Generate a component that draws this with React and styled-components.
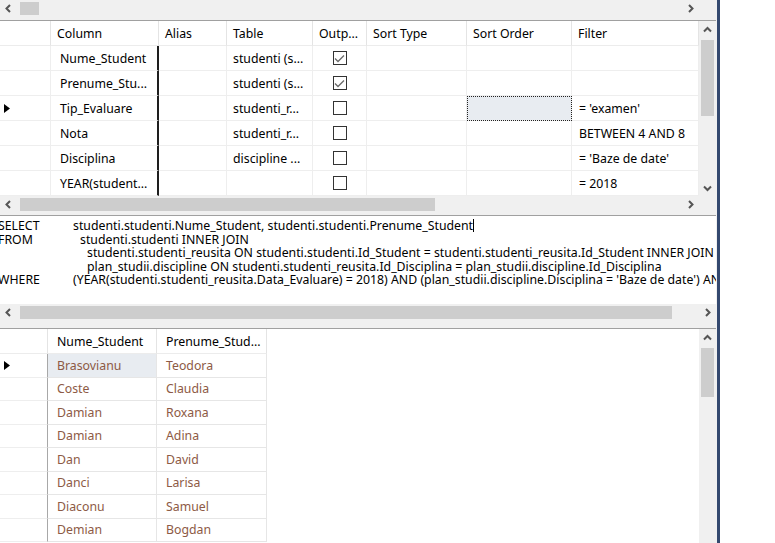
import React from "react";
import styled, { createGlobalStyle } from "styled-components";

const GlobalStyle = createGlobalStyle`
  html, body {
    margin: 0;
    padding: 0;
    background: #fff;
  }
  body {
    font-family: "Noto Sans", "Open Sans", sans-serif;
    font-size: 12.3px;
    color: #000;
  }
`;

const Screen = styled.div`
  display: flex;
  width: 775px;
  height: 543px;
  overflow: hidden;
  background: #fff;
`;

const Designer = styled.div`
  width: 716px;
  display: flex;
  flex-direction: column;
  background: #f0f0f0;
  border-right: 1px solid #f0f0f0;
  box-shadow: 3px 0 0 #34496f;
  margin-right: 3px;
`;

/* scrollbars */

const HScroll = styled.div`
  height: 17px;
  flex: none;
  display: flex;
  align-items: center;
  background: #f0f0f0;
  padding-right: ${(p) => (p.$corner ? "17px" : "0")};
`;

const ArrowBtn = styled.div`
  width: 17px;
  height: 17px;
  flex: none;
  display: flex;
  align-items: center;
  justify-content: center;
`;

const HTrack = styled.div`
  flex: 1;
  height: 100%;
  display: flex;
  align-items: center;
  padding-left: 3px;
`;

const HThumb = styled.div`
  width: ${(p) => p.$size}px;
  height: 13px;
  background: #cdcdcd;
`;

const VScroll = styled.div`
  width: 17px;
  flex: none;
  display: flex;
  flex-direction: column;
  background: #f0f0f0;
`;

const VTrack = styled.div`
  flex: 1;
  display: flex;
  flex-direction: column;
  align-items: center;
  padding-top: 2px;
`;

const VThumb = styled.div`
  width: 13px;
  height: ${(p) => p.$size}px;
  background: #cdcdcd;
`;

const Chevron = ({ dir }) => {
  const pts = {
    left: "5,1 1.5,4.5 5,8",
    right: "2,1 5.5,4.5 2,8",
    up: "1,5.5 4.5,2 8,5.5",
    down: "1,2.5 4.5,6 8,2.5",
  }[dir];
  const horiz = dir === "left" || dir === "right";
  return (
    <svg width={horiz ? 7 : 9} height={horiz ? 9 : 8} viewBox={horiz ? "0 0 7 9" : "0 0 9 8"}>
      <polyline points={pts} fill="none" stroke="#555" strokeWidth="2" />
    </svg>
  );
};

const HScrollBar = ({ thumb, corner }) => (
  <HScroll $corner={corner}>
    <ArrowBtn>
      <Chevron dir="left" />
    </ArrowBtn>
    <HTrack>
      <HThumb $size={thumb} />
    </HTrack>
    <ArrowBtn>
      <Chevron dir="right" />
    </ArrowBtn>
  </HScroll>
);

const VScrollBar = ({ thumb, down }) => (
  <VScroll>
    <ArrowBtn>
      <Chevron dir="up" />
    </ArrowBtn>
    <VTrack>
      <VThumb $size={thumb} />
    </VTrack>
    {down && (
      <ArrowBtn>
        <Chevron dir="down" />
      </ArrowBtn>
    )}
  </VScroll>
);

const Splitter = styled.div`
  height: ${(p) => p.$h}px;
  flex: none;
  background: #f0f0f0;
  border-bottom: 1px solid #a0a0a0;
  box-sizing: border-box;
`;

/* criteria grid */

const CriteriaPane = styled.div`
  height: 175px;
  flex: none;
  display: flex;
`;

const CritGrid = styled.div`
  flex: 1;
  display: grid;
  grid-template-columns: 51px 108px 68px 86px 54px 100px 105px 127px;
  grid-auto-rows: 25px;
  background: #fff;
  overflow: hidden;
`;

const HeadCell = styled.div`
  display: flex;
  align-items: center;
  padding-left: 6px;
  border-right: 1px solid #e4e4e4;
  border-bottom: 1px solid #ececec;
  white-space: nowrap;
  overflow: hidden;
`;

const Cell = styled.div`
  display: flex;
  align-items: center;
  justify-content: ${(p) => (p.$center ? "center" : "flex-start")};
  padding-left: ${(p) => (p.$center ? 0 : p.$pad ?? 6)}px;
  border-right: ${(p) => (p.$dark ? "2px solid #1e1e1e" : "1px solid #eeeeee")};
  border-bottom: 1px solid #eeeeee;
  background: ${(p) => (p.$focus ? "#e8ecf1" : "transparent")};
  outline: ${(p) => (p.$focus && !p.$noRing ? "1px dotted #222" : "none")};
  outline-offset: -1px;
  white-space: nowrap;
  overflow: hidden;
`;

const RowHead = styled.div`
  display: flex;
  align-items: center;
  padding-left: 4px;
  border-right: 1px solid ${(p) => p.$line};
  border-bottom: 1px solid #eeeeee;
`;

const Pointer = () => (
  <svg width="6" height="9" viewBox="0 0 6 9">
    <polygon points="0,0 6,4.5 0,9" fill="#000" />
  </svg>
);

const Box = styled.div`
  width: 12px;
  height: 12px;
  border: 1px solid #333;
  background: #fff;
  display: flex;
  align-items: center;
  justify-content: center;
`;

const CheckBox = ({ checked }) => (
  <Box>
    {checked && (
      <svg width="11" height="9" viewBox="0 0 11 9">
        <polyline points="1,4.5 4,7.5 10,1.5" fill="none" stroke="#6a6a6a" strokeWidth="1.3" />
      </svg>
    )}
  </Box>
);

const criteria = [
  { col: "Nume_Student", table: "studenti (s...", out: true },
  { col: "Prenume_Stu...", table: "studenti (s...", out: true },
  { col: "Tip_Evaluare", table: "studenti_r...", filter: "= 'examen'", current: true },
  { col: "Nota", table: "studenti_r...", filter: "BETWEEN 4 AND 8" },
  { col: "Disciplina", table: "discipline ...", filter: "= 'Baze de date'" },
  { col: "YEAR(student...", table: "", filter: "= 2018" },
];

const headers = ["", "Column", "Alias", "Table", "Outp...", "Sort Type", "Sort Order", "Filter"];

/* sql pane */

const SqlPane = styled.div`
  height: 88px;
  flex: none;
  background: #fff;
  padding-top: 3px;
  box-sizing: border-box;
  overflow: hidden;
  line-height: 13.6px;
`;

const SqlLine = styled.div`
  display: flex;
  white-space: pre;
  margin-left: -2px;
`;

const Keyword = styled.span`
  width: 75px;
  flex: none;
`;

const SqlText = styled.span`
  padding-left: ${(p) => p.$indent}px;
`;

const Caret = styled.span`
  display: inline-block;
  width: 1px;
  height: 13px;
  background: #000;
  vertical-align: -2px;
`;

/* results grid */

const ResultsPane = styled.div`
  flex: 1;
  display: flex;
  min-height: 0;
`;

const ResGrid = styled.div`
  flex: 1;
  display: grid;
  grid-template-columns: 48px 109px 110px;
  grid-template-rows: 25px;
  grid-auto-rows: 23.5px;
  align-content: start;
  background: #fff;
  overflow: hidden;
`;

const ResCell = styled(Cell)`
  padding-left: 9px;
  color: #8d5a45;
  border-right-color: #e6e6e6;
  border-bottom-color: #e6e6e6;
`;

const ResHead = styled(HeadCell)`
  padding-left: 9px;
`;

const results = [
  ["Brasovianu", "Teodora"],
  ["Coste", "Claudia"],
  ["Damian", "Roxana"],
  ["Damian", "Adina"],
  ["Dan", "David"],
  ["Danci", "Larisa"],
  ["Diaconu", "Samuel"],
  ["Demian", "Bogdan"],
];

const Filler = styled.div`
  flex: 1;
  background: #fff;
`;

const App = () => (
  <Screen>
    <GlobalStyle />
    <Designer>
      <HScrollBar thumb={19} corner />
      <Splitter $h={4} />

      <CriteriaPane>
        <CritGrid>
          {headers.map((h, i) => (
            <HeadCell key={i}>{h}</HeadCell>
          ))}
          {criteria.map((r, i) => (
            <React.Fragment key={i}>
              <RowHead $line="#eeeeee">{r.current && <Pointer />}</RowHead>
              <Cell $pad={9} $dark>
                {r.col}
              </Cell>
              <Cell />
              <Cell>{r.table}</Cell>
              <Cell $center>
                <CheckBox checked={r.out} />
              </Cell>
              <Cell />
              <Cell $focus={r.current} />
              <Cell $pad={7}>{r.filter}</Cell>
            </React.Fragment>
          ))}
        </CritGrid>
        <VScrollBar thumb={76} down />
      </CriteriaPane>
      <HScrollBar thumb={415} corner />
      <Splitter $h={3} />

      <SqlPane>
        <SqlLine>
          <Keyword>SELECT</Keyword>
          <SqlText $indent={0}>
            studenti.studenti.Nume_Student, studenti.studenti.Prenume_Student
            <Caret />
          </SqlText>
        </SqlLine>
        <SqlLine>
          <Keyword>FROM</Keyword>
          <SqlText $indent={7}>studenti.studenti INNER JOIN</SqlText>
        </SqlLine>
        <SqlLine>
          <Keyword />
          <SqlText $indent={14}>
            studenti.studenti_reusita ON studenti.studenti.Id_Student = studenti.studenti_reusita.Id_Student INNER JOIN
          </SqlText>
        </SqlLine>
        <SqlLine>
          <Keyword />
          <SqlText $indent={14}>
            plan_studii.discipline ON studenti.studenti_reusita.Id_Disciplina = plan_studii.discipline.Id_Disciplina
          </SqlText>
        </SqlLine>
        <SqlLine>
          <Keyword>WHERE</Keyword>
          <SqlText $indent={0}>
            (YEAR(studenti.studenti_reusita.Data_Evaluare) = 2018) AND (plan_studii.discipline.Disciplina = 'Baze de date') AND (studenti.studenti_reusita.Nota BETWEEN 4 AND 8)
          </SqlText>
        </SqlLine>
      </SqlPane>
      <HScrollBar thumb={652} />
      <Splitter $h={8} />

      <ResultsPane>
        <ResGrid>
          <HeadCell />
          <ResHead>Nume_Student</ResHead>
          <ResHead>Prenume_Stud...</ResHead>
          {results.map(([nume, prenume], i) => (
            <React.Fragment key={i}>
              <RowHead $line="#a8a8a8">{i === 0 && <Pointer />}</RowHead>
              <ResCell $focus={i === 0} $noRing>
                {nume}
              </ResCell>
              <ResCell>{prenume}</ResCell>
            </React.Fragment>
          ))}
        </ResGrid>
        <VScrollBar thumb={49} />
      </ResultsPane>
    </Designer>
    <Filler />
  </Screen>
);

export default App;
